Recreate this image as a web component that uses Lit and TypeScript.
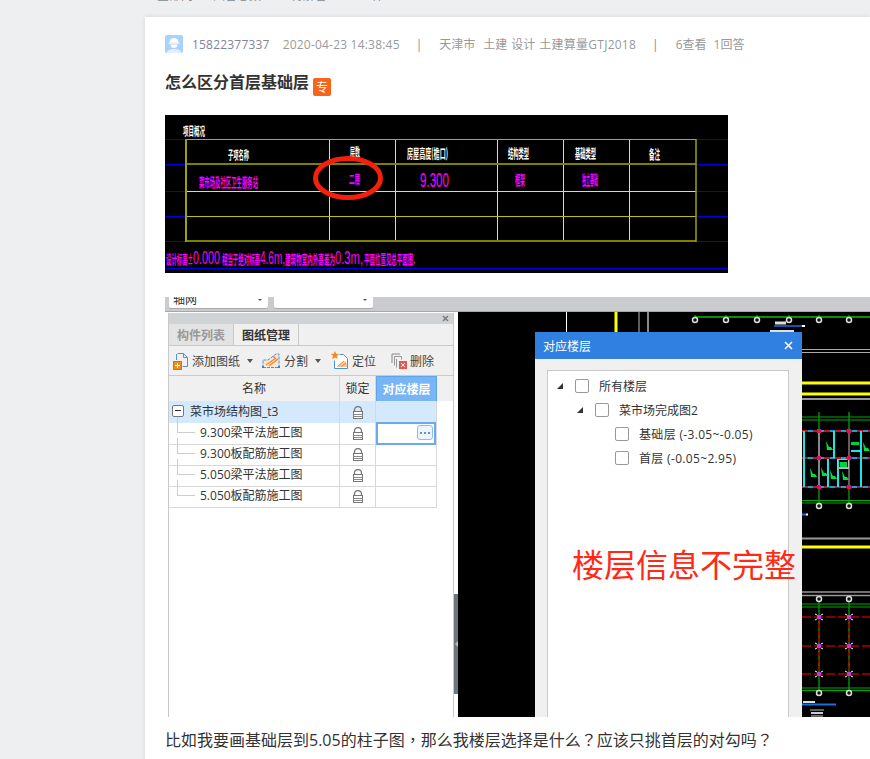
import {LitElement, html, svg, css} from 'lit';
import {customElement} from 'lit/decorators.js';

const cjk = css`"Noto Sans CJK SC", sans-serif`;

// text, x, baseline, squeezed width, fill, font size of the CAD labels in the project table
const tableLabels: [string, number, number, number, string, number][] = [
  ['项目概况', 18, 21, 22, '#fff', 12],
  ['子项名称', 63, 45, 21, '#fff', 12],
  ['层数', 185, 42, 10, '#fff', 12],
  ['房屋高度(檐口)', 242, 43, 41, '#fff', 13],
  ['结构类型', 343, 43, 21, '#fff', 13],
  ['基础类型', 410, 43, 21, '#fff', 13],
  ['备注', 484, 44, 11, '#fff', 13],
  ['菜市场及社区卫生服务站', 34, 72, 59, '#f0f', 13],
  ['二层', 184, 69, 11, '#f0f', 12],
  ['框架', 350, 70, 10, '#f0f', 14],
  ['独立基础', 417, 70, 16, '#f0f', 14],
];

// the design note under the table is one line, the numbers in it are thin and taller
const noteParts: [string, number, number, boolean][] = [
  ['设计标高±', 1, 27, false],
  ['0.000', 28, 27, true],
  ['相当于绝对标高', 57, 38, false],
  ['4.6m,', 95, 25, true],
  ['建筑物室内外高差为', 120, 50, false],
  ['0.3m,', 170, 28, true],
  ['平面位置见总平面图.', 199, 51, false],
];

const rows = ['9.300梁平法施工图', '9.300板配筋施工图', '5.050梁平法施工图', '5.050板配筋施工图'];

const floors = [
  {depth: 0, label: '所有楼层', open: true},
  {depth: 1, label: '菜市场完成图2', open: true},
  {depth: 2, label: '基础层 (-3.05~-0.05)', open: false},
  {depth: 2, label: '首层 (-0.05~2.95)', open: false},
];

const lockIcon = html`<svg width="12" height="13" viewBox="0 0 12 13">
  <path d="M2.500 6V4a3.500 3.500 0 0 1 7 0v2" fill="none" stroke="#777" stroke-width="1.300" />
  <rect x="1.500" y="5.500" width="9" height="7" fill="#fff" stroke="#777" />
  <path d="M1.500 8.500h9M1.500 10.500h9" stroke="#888" />
</svg>`;

const caret = html`<svg class="caret" width="6" height="4" viewBox="0 0 6 4"><path d="M0 0h6L3 4z" fill="#555" /></svg>`;

// everything in here is in screenshot coordinates (viewBox starts at the canvas corner)
const ringColumns = [695, 726, 757, 789, 819, 849];
const planX = [819, 849];

function hline(y: number, color: string, w = 1, x1 = 802, x2 = 870, dash = '') {
  return svg`<line x1=${x1} y1=${y} x2=${x2} y2=${y} stroke=${color} stroke-width=${w} stroke-dasharray=${dash} />`;
}

function vline(x: number, y1: number, y2: number, color: string, w = 1, dash = '') {
  return svg`<line x1=${x} y1=${y1} x2=${x} y2=${y2} stroke=${color} stroke-width=${w} stroke-dasharray=${dash} />`;
}

function ring(x: number, y: number) {
  return svg`<circle cx=${x} cy=${y} r="2.500" fill="#111" stroke="#ddd" stroke-width="1.500" />`;
}

function node(x: number, y: number) {
  return svg`<path d="M${x - 4} ${y - 3}l2 1M${x + 4} ${y - 3}l-2 1M${x - 4} ${y + 3}l2 -1M${x + 4} ${y + 3}l-2 -1" stroke="#fff" />
    <rect x=${x - 2} y=${y - 2} width="4" height="4" fill="#c03cd8" />`;
}

function blob(x: number, y: number) {
  return svg`<path d="M${x - 3} ${y - 5}l1 9h6l-2 -3h-2z" fill="#00e040" />`;
}

const cadDrawing = svg`
  ${vline(566.500, 312, 332, '#fff')}
  ${vline(616, 312, 332, '#ff0', 3)}
  ${vline(639, 312, 332, '#bbb')}
  ${vline(648, 312, 332, '#888', 2)}
  ${hline(317, '#0a8a0a', 2, 695)}
  ${ringColumns.map((x) => svg`${vline(x, 315, 320, '#0c0')}${ring(x, 320)}`)}
  ${hline(323, '#ddd', 3, 775, 786)}
  ${hline(326, '#1c6fe0', 1.500, 774, 803)}
  ${hline(326, '#fff', 2, 802, 805)}
  ${hline(331, '#ddd', 2, 770, 794)}
  ${hline(349.500, '#aaa')}
  ${hline(352.500, '#aaa')}
  ${hline(383, '#ff0', 3)}
  ${hline(394, '#ff0', 3)}
  ${hline(399, '#999', 2)}
  ${hline(417, '#0a0')}
  ${hline(420, '#0a0')}
  ${planX.map((x) => svg`${vline(x, 412, 506, '#0a8a0a', 1.500)}`)}
  ${hline(431, '#1a9fd0', 2)}
  ${hline(458, '#1a9fd0', 2)}
  ${hline(487, '#1a9fd0', 2)}
  ${hline(431, '#c01030', 2, 802, 870, '6 5')}
  ${hline(458, '#c01030', 2, 802, 870, '6 5')}
  ${hline(487, '#c01030', 2, 802, 870, '6 5')}
  ${vline(804, 431, 487, '#19e6e6', 2)}
  ${vline(834, 431, 458, '#19e6e6', 2)}
  ${vline(828, 459, 487, '#19e6e6', 2)}
  ${vline(838, 459, 487, '#19e6e6', 2)}
  ${vline(861, 431, 487, '#19e6e6', 2)}
  ${vline(819, 431, 487, '#7b8a8a', 2)}
  ${vline(849, 431, 487, '#6a5a60', 2)}
  ${hline(451, '#19e6e6', 2, 851, 861)}
  ${hline(468, '#19e6e6', 2, 838, 849)}
  <rect x="837.500" y="459.500" width="11" height="9" fill="none" stroke="#bbb" />
  ${[[829, 446], [866, 447], [813, 473], [824, 472], [833, 475], [845, 476]].map(([x, y]) => blob(x, y))}
  <rect x="840" y="462" width="7" height="5" fill="#00d040" />
  <rect x="851" y="442" width="8" height="3" fill="#00d040" />
  ${[[819, 431], [849, 431], [819, 458], [849, 458], [819, 487], [849, 487]].map(
    ([x, y]) => svg`<rect x=${x - 2} y=${y - 2} width="4" height="4" fill="#e01060" />`
  )}
  ${hline(500.500, '#0a0')}
  ${hline(503, '#0a0')}
  ${planX.map((x) => ring(x, 506))}
  ${hline(514.500, '#1c6fe0', 2, 802, 806)}
  ${hline(514.500, '#fff', 2, 806, 808)}
  ${hline(538.500, '#999', 2)}
  ${hline(547, '#ff0', 3)}
  ${hline(592, '#999', 1.500)}
  ${hline(595.500, '#999', 1.500)}
  ${hline(604, '#0a0')}
  ${hline(607, '#0a0')}
  ${hline(688, '#0a0')}
  ${hline(690.500, '#0a0')}
  ${planX.map((x) => svg`${vline(x, 599, 693, '#0a8a0a', 1.500)}${vline(x, 617, 674, '#a00000', 2, '4 3')}`)}
  ${hline(617, '#b00000', 1.500, 802, 870, '9 3')}
  ${hline(646, '#b00000', 1.500, 802, 870, '9 3')}
  ${hline(674, '#b00000', 1.500, 802, 870, '9 3')}
  ${planX.map((x) => svg`${ring(x, 599)}${ring(x, 693)}`)}
  ${planX.flatMap((x) => [617, 646, 674].map((y) => node(x, y)))}
  ${hline(704.500, '#1c6fe0', 2, 802, 836)}
  ${hline(702, '#ddd', 2, 803, 815)}
  ${hline(710, '#bbb', 1, 810, 824)}
  ${hline(713, '#ccc', 2, 811, 823)}
  ${hline(716, '#ccc', 1, 811, 823)}
`;

@customElement('app-root')
export class AppRoot extends LitElement {
  static styles = css`
    :host {
      display: block;
      height: 759px;
      overflow: hidden;
      background: #eeeff1;
      font-family: 'Open Sans', ${cjk};
      color: #333;
    }

    .crumbs {
      display: flex;
      height: 3px;
      overflow: hidden;
      padding-left: 157px;
      margin-bottom: 14px;
      font-size: 12px;
      color: #888;
      line-height: 14px;
    }

    .crumbs span {
      margin-top: -11px;
    }

    .crumbs .c2 {
      margin-left: 20px;
    }

    .crumbs .c3 {
      margin-left: 20px;
    }

    .crumbs .c4 {
      margin-left: 21px;
    }

    .crumbs b {
      font-weight: normal;
      color: #e44;
    }

    .card {
      margin-left: 145px;
      padding: 18px 0 0 20px;
      background: #fff;
      height: 760px;
      box-shadow: 0 0 5px rgba(0, 0, 0, 0.1);
    }

    .meta {
      display: flex;
      align-items: center;
      height: 18px;
      font-size: 12px;
      color: #999;
      white-space: nowrap;
    }

    .avatar {
      display: block;
      margin-right: 9px;
    }

    .uid {
      color: #7f83a0;
      margin-right: 13px;
      letter-spacing: 0.2px;
    }

    .date {
      letter-spacing: 0.2px;
    }

    .sep {
      margin: 0 17px 0 16px;
      color: #888;
    }

    .region {
      margin-right: 8px;
    }

    .tag {
      margin-right: 4px;
    }

    .soft {
      letter-spacing: 0.25px;
    }

    .stat {
      margin-right: 7px;
    }

    h1 {
      display: flex;
      align-items: center;
      margin: 17px 0 0;
      height: 22px;
      font-size: 16px;
      font-family: ${cjk};
      font-weight: bold;
      line-height: 22px;
      color: #333;
    }

    .badge {
      display: inline-flex;
      align-items: center;
      justify-content: center;
      width: 18px;
      height: 18px;
      margin: 11px 0 0 4px;
      border-radius: 2px;
      background: #f8641a;
      color: #fff;
      font-size: 12px;
      font-weight: normal;
    }

    .table-shot {
      display: block;
      margin-top: 23px;
      background: #000;
    }

    .app-shot {
      display: flex;
      flex-direction: column;
      width: 705px;
      height: 420px;
      margin-top: 24px;
      overflow: hidden;
      background: #fff;
    }

    .strip {
      flex: none;
      display: flex;
      gap: 6px;
      height: 14px;
      padding-left: 4px;
      background: #c9cbce;
      border-bottom: 1px solid #a5a7aa;
    }

    .combo {
      position: relative;
      overflow: hidden;
      box-sizing: border-box;
      width: 99px;
      height: 11px;
      background: #fff;
      font-size: 12px;
      line-height: 6px;
      padding-left: 4px;
      color: #333;
      border-radius: 0 0 2px 2px;
      box-shadow: 0 1px 0 #aaa;
    }

    .combo i {
      position: absolute;
      right: 6px;
      top: 2px;
      border: 2px solid transparent;
      border-top-color: #555;
    }

    .work {
      flex: 1;
      display: flex;
      min-height: 0;
    }

    .pane {
      flex: none;
      box-sizing: border-box;
      width: 286px;
      margin: 1px 0 0 3px;
      border-left: 1px solid #c9c9c9;
      border-right: 1px solid #c9c9c9;
      font-size: 12px;
      color: #333;
    }

    .pane-head {
      position: relative;
      height: 11px;
      background: #d0d3d6;
    }

    .pane-head svg {
      position: absolute;
      right: 4px;
      top: 2px;
    }

    .tabs {
      display: flex;
      height: 21px;
      background: #f0f0f0;
      border-bottom: 1px solid #c9c9c9;
      font-weight: bold;
      line-height: 21px;
      font-family: ${cjk};
    }

    .tab {
      width: 64px;
      text-align: center;
      border-right: 1px solid #c9c9c9;
    }

    .tab.off {
      background: #e3e3e3;
      color: #999;
    }

    .tools {
      display: flex;
      align-items: center;
      height: 29px;
      padding-left: 4px;
      background: #f0f0f0;
      border-bottom: 1px solid #c9c9c9;
    }

    .tool {
      display: flex;
      align-items: center;
      gap: 3px;
      color: #444;
    }

    .tool.t2 {
      margin-left: 8px;
    }

    .tool.t3 {
      margin-left: 10px;
    }

    .tool.t4 {
      margin-left: 15px;
    }

    .caret {
      margin-left: 4px;
    }

    .row {
      display: grid;
      grid-template-columns: 171px 36px 61px;
      height: 21px;
      line-height: 22px;
      box-sizing: border-box;
      white-space: nowrap;
    }

    .row > div {
      box-sizing: border-box;
      border-right: 1px solid #d8d8d8;
      border-bottom: 1px solid #d8d8d8;
    }

    .row .lock {
      display: flex;
      align-items: center;
      justify-content: center;
    }

    .head {
      height: 25px;
      line-height: 26px;
      text-align: center;
      background: #f0f0f0;
    }

    .head .floor {
      background: #77b5f5;
      color: #fff;
      font-weight: bold;
      border: 1px solid #5fa5ee;
      line-height: 24px;
      font-family: ${cjk};
    }

    .group > div {
      background: #d5e9fd;
      border-bottom-color: #fff;
    }

    .name {
      position: relative;
    }

    .group .name {
      padding-left: 21px;
    }

    .leaf .name {
      padding-left: 31px;
    }

    .minus {
      position: absolute;
      left: 3px;
      top: 4px;
      box-sizing: border-box;
      width: 12px;
      height: 12px;
      background: #fff;
      border: 1px solid #777;
      border-radius: 2px;
    }

    .minus::after {
      content: '';
      position: absolute;
      left: 2px;
      right: 2px;
      top: 4px;
      height: 1px;
      background: #333;
    }

    .branch {
      position: absolute;
      left: 8px;
      top: -5px;
      width: 17px;
      height: 15px;
      border-left: 1px solid #ccc;
      border-bottom: 1px solid #ccc;
    }

    .picked {
      position: relative;
    }

    .picked::after {
      content: '';
      position: absolute;
      inset: 0 0 -1px 0;
      border: 2px solid #6aabf0;
    }

    .dots {
      position: absolute;
      right: 3px;
      top: 3px;
      z-index: 1;
      display: flex;
      align-items: center;
      justify-content: center;
      gap: 2px;
      box-sizing: border-box;
      width: 16px;
      height: 15px;
      background: #ecf4fd;
      border: 1px solid #8cbcf0;
      border-radius: 3px;
    }

    .dots i {
      width: 2px;
      height: 2px;
      background: #6c8fb8;
    }

    .gutter {
      flex: none;
      width: 4px;
    }

    .gutter div {
      display: flex;
      align-items: center;
      justify-content: center;
      height: 100px;
      margin-top: 282px;
      background: #6d7680;
    }

    .gutter i {
      border: 3px solid transparent;
      border-left-width: 0;
      border-right-color: #b5bbc1;
    }

    .canvas {
      position: relative;
      flex: 1;
      background: #000;
      overflow: hidden;
    }

    .canvas > svg {
      display: block;
    }

    .dialog {
      position: absolute;
      left: 77px;
      top: 20px;
      bottom: 0;
      display: flex;
      flex-direction: column;
      width: 267px;
      background: #f0f0f0;
      font-size: 12px;
    }

    .dialog header {
      flex: none;
      display: flex;
      align-items: center;
      justify-content: space-between;
      height: 27px;
      padding: 0 9px 0 8px;
      background: #2f80e0;
      color: #fff;
      font-family: ${cjk};
    }

    .dialog header svg {
      display: block;
    }

    .floors {
      flex: 1;
      box-sizing: border-box;
      margin: 11px 13px 0 12px;
      padding-top: 3px;
      background: #fff;
      border: 1px solid #c8c8c8;
      border-bottom: none;
      color: #333;
    }

    .floor-row {
      display: flex;
      align-items: center;
      height: 24px;
    }

    .floor-row.d0 {
      padding-left: 9px;
    }

    .floor-row.d1 {
      padding-left: 29px;
    }

    .floor-row.d2 {
      padding-left: 49px;
      letter-spacing: 0.33px;
    }

    .tri {
      flex: none;
      margin-right: 12px;
    }

    .tri.none {
      visibility: hidden;
    }

    .check {
      flex: none;
      box-sizing: border-box;
      width: 14px;
      height: 14px;
      margin-right: 10px;
      border: 1px solid #999;
      border-radius: 2px;
      background: #fff;
    }

    .note {
      position: absolute;
      left: 37px;
      top: 209px;
      font-family: ${cjk};
      font-size: 32px;
      line-height: 44px;
      color: #ff2a16;
      white-space: nowrap;
    }

    p {
      margin: 12px 0 0;
      font-family: 'Open Sans', 'Noto Sans CJK TC', sans-serif;
      font-size: 16px;
      line-height: 22px;
      color: #333;
      white-space: nowrap;
    }
  `;

  render() {
    return html`
      <div class="crumbs">
        <span>全部问</span><span class="c2">回答总数 1</span><span class="c3">待解答 2</span
        ><span class="c4"><b>11</b>件</span>
      </div>
      <main class="card">
        <div class="meta">
          <svg class="avatar" width="18" height="18" viewBox="0 0 18 18">
            <rect width="18" height="18" rx="2" fill="#a8d2fb" />
            <path d="M4.500 7.500a4.500 4.500 0 0 1 9 0z" fill="#fff" />
            <rect x="3.500" y="7.500" width="11" height="1.200" fill="#fff" />
            <path d="M5.500 9.500h7c0 2.500-1.500 3.500-3.500 3.500S5.500 12 5.500 9.500z" fill="#fff" />
            <path d="M2 18c0-3 3-4 7-4s7 1 7 4z" fill="#e3f1fe" />
          </svg>
          <span class="uid">15822377337</span>
          <span class="date">2020-04-23 14:38:45</span>
          <span class="sep">|</span>
          <span class="region">天津市</span>
          <span class="tag">土建</span>
          <span class="tag">设计</span>
          <span class="soft">土建算量GTJ2018</span>
          <span class="sep">|</span>
          <span class="stat">6查看</span>
          <span>1回答</span>
        </div>

        <h1>怎么区分首层基础层<span class="badge">专</span></h1>

        ${this.renderTableShot()}

        <div class="app-shot">
          <div class="strip">
            <div class="combo">轴网<i></i></div>
            <div class="combo"><i></i></div>
          </div>
          <div class="work">
            ${this.renderPane()}
            <div class="gutter"><div><i></i></div></div>
            <div class="canvas">
              <svg width="412" height="405" viewBox="458 312 412 405">${cadDrawing}</svg>
              ${this.renderDialog()}
            </div>
          </div>
        </div>

        <p>比如我要画基础层到5.05的柱子图，那么我楼层选择是什么？应该只挑首层的对勾吗？</p>
      </main>
    `;
  }

  renderTableShot() {
    const cols = [164.5, 230.5, 332.5, 398.5, 464.5];
    const bands = [24.5, 49.5, 76.5, 101.5, 126.5];
    return html`<svg class="table-shot" width="563" height="158" viewBox="0 0 563 158">
      ${bands.map(
        (y) => svg`<line x1="0" y1=${y} x2="21" y2=${y} stroke="#0000e0" />
          <line x1="531" y1=${y} x2="563" y2=${y} stroke="#0000e0" />`
      )}
      <line x1="0" y1="153.500" x2="563" y2="153.500" stroke="#0000f0" />
      ${cols.map((x) => svg`<line x1=${x} y1="24" x2=${x} y2="126" stroke="#f0f000" />`)}
      <line x1="21" y1="76.500" x2="531" y2="76.500" stroke="#f0f000" />
      <line x1="21" y1="101.500" x2="531" y2="101.500" stroke="#c0c000" />
      <line x1="21" y1="49" x2="531" y2="49" stroke="#808000" stroke-width="2" />
      <line x1="21" y1="24.500" x2="531" y2="24.500" stroke="#b0b000" />
      <line x1="21" y1="126" x2="531" y2="126" stroke="#808000" stroke-width="2" />
      <line x1="21" y1="24" x2="21" y2="127" stroke="#a0a000" stroke-width="2" />
      <line x1="531" y1="24" x2="531" y2="127" stroke="#a0a000" stroke-width="1.500" />
      ${tableLabels.map(
        ([text, x, y, w, fill, size]) => svg`<text
          x=${x}
          y=${y}
          fill=${fill}
          font-size=${size}
          font-weight="bold"
          font-family="Noto Sans CJK SC"
          textLength=${w}
          lengthAdjust="spacingAndGlyphs"
        >${text}</text>`
      )}
      <text
        x="255"
        y="72"
        fill="#f0f"
        font-size="21"
        font-family="Liberation Sans"
        textLength="29"
        lengthAdjust="spacingAndGlyphs"
      >9.300</text>
      <text y="149" fill="#f0f" font-family="Noto Sans CJK SC">${noteParts.map(
        ([text, x, w, thin]) => svg`<tspan
          x=${x}
          font-size=${thin ? 18 : 13}
          font-weight=${thin ? 'normal' : 'bold'}
          font-family=${thin ? 'Liberation Sans' : 'Noto Sans CJK SC'}
          textLength=${w}
          lengthAdjust="spacingAndGlyphs"
        >${text}</tspan>`
      )}</text>
      <ellipse cx="183" cy="63" rx="32.500" ry="19.500" fill="none" stroke="#f5200c" stroke-width="5" />
    </svg>`;
  }

  renderPane() {
    return html`<div class="pane">
      <div class="pane-head">
        <svg width="7" height="7" viewBox="0 0 7 7">
          <path d="M1 1l5 5M6 1l-5 5" stroke="#777" stroke-width="1.400" />
        </svg>
      </div>
      <div class="tabs">
        <div class="tab off">构件列表</div>
        <div class="tab">图纸管理</div>
      </div>
      <div class="tools">
        <div class="tool">
          <svg width="16" height="18" viewBox="0 0 16 18">
            <path d="M4.500 1.500h6l4 4v9h-5M3.500 8V2" fill="none" stroke="#5b8fd0" />
            <path d="M10.500 1.500v4h4" fill="none" stroke="#5b8fd0" />
            <rect x="0.500" y="9.500" width="8" height="8" fill="#f08a24" stroke="#e06a10" />
            <path d="M4.500 11v5M2 13.500h5" stroke="#fff" />
          </svg>
          添加图纸${caret}
        </div>
        <div class="tool t2">
          <svg width="20" height="16" viewBox="0 0 20 16">
            <path d="M2 14.500V7h5l8-6h3v13.500z" fill="#fbe7d3" stroke="#4a90e0" stroke-dasharray="3 1" />
            <path d="M5 12l10-7M8 13l9-7M12 3l3 3" stroke="#f0862a" stroke-width="1.300" />
            <rect x="1" y="13" width="2" height="2" fill="#2f80e0" />
            <rect x="17" y="13" width="2" height="2" fill="#2f80e0" />
          </svg>
          分割${caret}
        </div>
        <div class="tool t3">
          <svg width="18" height="19" viewBox="0 0 18 19">
            <path d="M8.500 3.500h4l4 4v10h-13v-8" fill="#fff" stroke="#4a90e0" />
            <path d="M5 16l9-6 2 3v3z" fill="#f8c89a" />
            <path d="M7 15l6-5M10 16l5-4" stroke="#f0862a" />
            <path d="M4 0l1.200 2.800L8 3 5.800 5l1 3L4 6.500 1 8l1-3L0 3l2.800-.2z" fill="#f5881f" />
          </svg>
          定位
        </div>
        <div class="tool t4">
          <svg width="16" height="16" viewBox="0 0 16 16">
            <path d="M3.500 12.500V3.500h7v3" fill="none" stroke="#999" />
            <path d="M1 10V1h8" fill="none" stroke="#888" />
            <path d="M5.500 14.500V6" fill="none" stroke="#999" />
            <rect x="8" y="8" width="8" height="8" fill="#e8574f" />
            <path d="M10 10l4 4M14 10l-4 4" stroke="#fff" />
          </svg>
          删除
        </div>
      </div>
      <div class="row head">
        <div>名称</div>
        <div>锁定</div>
        <div class="floor">对应楼层</div>
      </div>
      <div class="row group">
        <div class="name"><span class="minus"></span>菜市场结构图_t3</div>
        <div class="lock">${lockIcon}</div>
        <div></div>
      </div>
      ${rows.map(
        (name, i) => html`<div class="row leaf">
          <div class="name"><span class="branch"></span>${name}</div>
          <div class="lock">${lockIcon}</div>
          <div class=${i === 0 ? 'picked' : ''}>
            ${i === 0 ? html`<span class="dots"><i></i><i></i><i></i></span>` : ''}
          </div>
        </div>`
      )}
    </div>`;
  }

  renderDialog() {
    return html`<div class="dialog">
      <header>
        <span>对应楼层</span>
        <svg width="9" height="9" viewBox="0 0 9 9">
          <path d="M1 1l7 7M8 1l-7 7" stroke="#fff" stroke-width="1.500" />
        </svg>
      </header>
      <div class="floors">
        ${floors.map(
          (floor) => html`<div class="floor-row d${floor.depth}">
            <svg class="tri ${floor.open ? '' : 'none'}" width="6" height="6" viewBox="0 0 6 6">
              <path d="M6 0v6H0z" fill="#333" />
            </svg>
            <span class="check"></span>
            <span>${floor.label}</span>
          </div>`
        )}
      </div>
      <div class="note">楼层信息不完整</div>
    </div>`;
  }
}
